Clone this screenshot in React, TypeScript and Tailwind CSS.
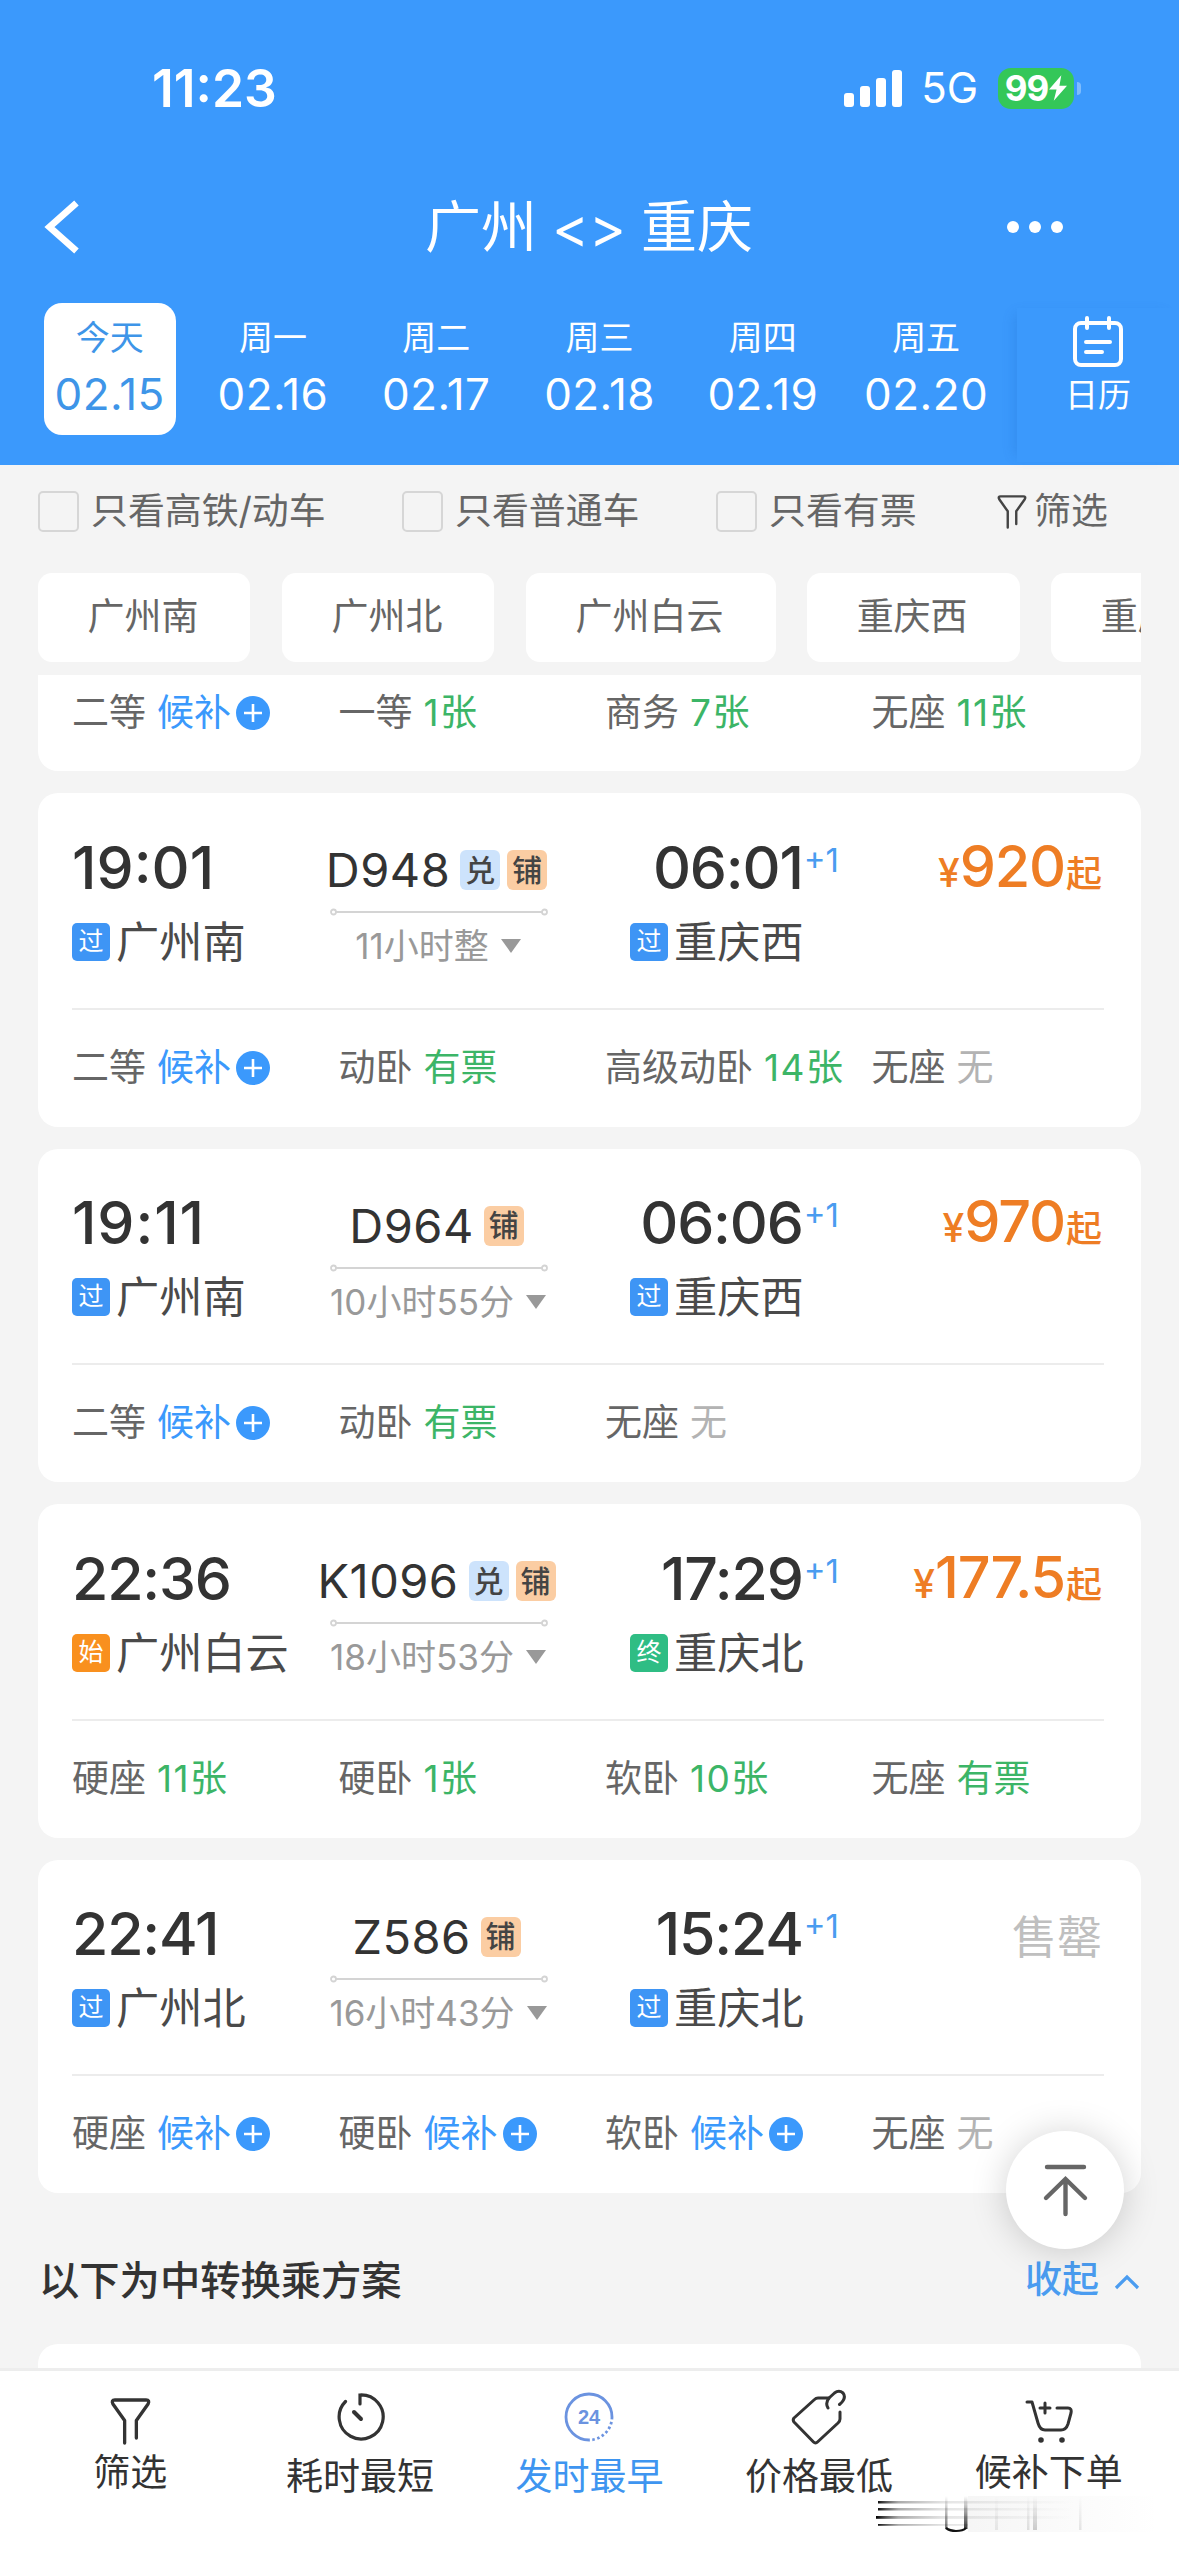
import { useState } from "react";

type Tone = "wait" | "ok" | "none";
type Seat = { name: string; left: string; tone: Tone };
type Stop = "过" | "始" | "终";

type Train = {
  no: string;
  tags: ("兑" | "铺")[];
  depart: string;
  arrive: string;
  from: string;
  to: string;
  fromType: Stop;
  toType: Stop;
  duration: string;
  price: string | null;
  seats: Seat[];
};

const DAYS = [
  { week: "今天", date: "02.15" },
  { week: "周一", date: "02.16" },
  { week: "周二", date: "02.17" },
  { week: "周三", date: "02.18" },
  { week: "周四", date: "02.19" },
  { week: "周五", date: "02.20" },
];

const STATIONS = ["广州南", "广州北", "广州白云", "重庆西", "重庆北"];

const PREV_SEATS: Seat[] = [
  { name: "二等", left: "候补", tone: "wait" },
  { name: "一等", left: "1张", tone: "ok" },
  { name: "商务", left: "7张", tone: "ok" },
  { name: "无座", left: "11张", tone: "ok" },
];

const TRAINS: Train[] = [
  {
    no: "D948",
    tags: ["兑", "铺"],
    depart: "19:01",
    arrive: "06:01",
    from: "广州南",
    to: "重庆西",
    fromType: "过",
    toType: "过",
    duration: "11小时整",
    price: "920",
    seats: [
      { name: "二等", left: "候补", tone: "wait" },
      { name: "动卧", left: "有票", tone: "ok" },
      { name: "高级动卧", left: "14张", tone: "ok" },
      { name: "无座", left: "无", tone: "none" },
    ],
  },
  {
    no: "D964",
    tags: ["铺"],
    depart: "19:11",
    arrive: "06:06",
    from: "广州南",
    to: "重庆西",
    fromType: "过",
    toType: "过",
    duration: "10小时55分",
    price: "970",
    seats: [
      { name: "二等", left: "候补", tone: "wait" },
      { name: "动卧", left: "有票", tone: "ok" },
      { name: "无座", left: "无", tone: "none" },
    ],
  },
  {
    no: "K1096",
    tags: ["兑", "铺"],
    depart: "22:36",
    arrive: "17:29",
    from: "广州白云",
    to: "重庆北",
    fromType: "始",
    toType: "终",
    duration: "18小时53分",
    price: "177.5",
    seats: [
      { name: "硬座", left: "11张", tone: "ok" },
      { name: "硬卧", left: "1张", tone: "ok" },
      { name: "软卧", left: "10张", tone: "ok" },
      { name: "无座", left: "有票", tone: "ok" },
    ],
  },
  {
    no: "Z586",
    tags: ["铺"],
    depart: "22:41",
    arrive: "15:24",
    from: "广州北",
    to: "重庆北",
    fromType: "过",
    toType: "过",
    duration: "16小时43分",
    price: null,
    seats: [
      { name: "硬座", left: "候补", tone: "wait" },
      { name: "硬卧", left: "候补", tone: "wait" },
      { name: "软卧", left: "候补", tone: "wait" },
      { name: "无座", left: "无", tone: "none" },
    ],
  },
];

const TONE: Record<Tone, string> = {
  wait: "text-[#3b99fc]",
  ok: "text-[#3cb567]",
  none: "text-[#b3b3b3]",
};

const STOP_BG: Record<Stop, string> = {
  过: "bg-[#3e95f5]",
  始: "bg-[#f9901e]",
  终: "bg-[#2fbd84]",
};

export default function App() {
  const [day, setDay] = useState(0);

  return (
    <div className="relative flex h-[2556px] w-[1179px] flex-col overflow-hidden bg-[#f4f4f4] font-[Inter,'Noto_Sans_CJK_SC',sans-serif] text-[#333]">
      <header className="h-[465px] shrink-0 bg-[#3b99fc] text-white">
        <StatusBar />

        <div className="flex h-[126px] items-center justify-between pr-[116px] pb-[20px] pl-[44px]">
          <button className="w-[190px]" aria-label="返回">
            <svg width="36" height="54" viewBox="0 0 36 56" fill="none" stroke="currentColor" strokeWidth="7">
              <path d="M33 3 L5 28 L33 53" />
            </svg>
          </button>
          <h1 className="flex items-center text-[56px] leading-[64px]">
            广州<span className="mx-[15px] pt-[2px] text-[56px]">&lt;&gt;</span>重庆
          </h1>
          <div className="flex w-[119px] justify-end gap-[10px]">
            <i className="size-[12px] rounded-full bg-white" />
            <i className="size-[12px] rounded-full bg-white" />
            <i className="size-[12px] rounded-full bg-white" />
          </div>
        </div>

        <div className="flex h-[162px] pl-[28px]">
          {DAYS.map((d, i) => (
            <button
              key={d.date}
              onClick={() => setDay(i)}
              className="flex w-[163.3px] justify-center pt-[3px]"
            >
              <span
                className={`flex h-[132px] w-[132px] flex-col items-center rounded-[18px] pt-[13px] ${
                  day === i ? "bg-white text-[#3e95e8]" : "text-white"
                }`}
              >
                <span className="text-[34px] leading-[44px]">{d.week}</span>
                <span className="mt-[8px] text-[44px] leading-[52px] tracking-[0.01em]">{d.date}</span>
              </span>
            </button>
          ))}
          <button className="mt-[8px] ml-[9px] flex flex-1 flex-col items-center pt-[8px] shadow-[-8px_0_12px_-6px_rgba(20,90,180,0.2)]">
            <svg width="52" height="52" viewBox="0 0 52 52" fill="none" stroke="currentColor" strokeWidth="4" strokeLinecap="round">
              <rect x="3" y="7" width="46" height="42" rx="6" />
              <path d="M15 2v10M37 2v10M14 26h24M14 36h16" />
            </svg>
            <span className="mt-[5px] text-[33px] leading-[44px]">日历</span>
          </button>
        </div>
      </header>

      {/* 筛选条件 */}
      <div className="flex h-[108px] shrink-0 items-center pb-[15px] pl-[38px] text-[36.9px] text-[#666]">
        <Check label="只看高铁/动车" className="w-[364px]" />
        <Check label="只看普通车" className="w-[314px]" />
        <Check label="只看有票" className="w-[281px]" />
        <FunnelIcon className="h-[34px] w-[30px] text-[#444]" />
        <span className="ml-[7px] pb-[2px]">筛选</span>
      </div>

      <div className="mx-[38px] flex shrink-0 gap-[31.7px] overflow-hidden">
        {STATIONS.map((s) => (
          <button
            key={s}
            className="h-[89px] shrink-0 rounded-[14px] bg-white pr-[52px] pb-[2px] pl-[49.4px] text-[37px] text-[#666]"
          >
            {s}
          </button>
        ))}
      </div>

      <main className="mx-[38px] mt-[13px] flex min-h-0 flex-1 flex-col overflow-hidden">
        <div className="mb-[22px] h-[96px] shrink-0 rounded-b-[20px] bg-white px-[34px] pt-[12px]">
          <Seats seats={PREV_SEATS} />
        </div>

        {TRAINS.map((t) => (
          <TrainCard key={t.no} train={t} />
        ))}

        <div className="flex h-[129px] shrink-0 items-center justify-between pl-[1px]">
          <h2 className="pt-[3px] text-[40.3px] font-medium">以下为中转换乘方案</h2>
          <button className="flex items-center pr-[1px] text-[37px] font-medium text-[#4a9cf0]">
            收起
            <svg className="mt-[4px] ml-[15px]" width="26" height="16" viewBox="0 0 26 16" fill="none" stroke="currentColor" strokeWidth="3.2">
              <path d="M2 14 L13 3 L24 14" />
            </svg>
          </button>
        </div>
        <div className="h-[60px] shrink-0 rounded-[20px] bg-white" />
      </main>

      <TabBar />

      <button
        aria-label="回到顶部"
        className="absolute top-[2131px] left-[1006px] flex size-[118px] items-center justify-center rounded-full bg-white text-[#666] shadow-[0_2px_36px_rgba(0,0,0,0.18)]"
      >
        <svg width="48" height="54" viewBox="0 0 48 54" fill="none" stroke="currentColor" strokeWidth="4.4" strokeLinecap="round">
          <path d="M6 4h37M24.5 17v34M5 35 L24.5 16 L44 35" />
        </svg>
      </button>
    </div>
  );
}

function StatusBar() {
  return (
    <div className="flex h-[174px] items-center justify-between pt-[2px] pr-[98px] pl-[152px]">
      <span className="text-[51.5px] leading-[60px] font-semibold">11:23</span>
      <div className="flex items-center">
        <div className="flex h-[38px] items-end gap-[6px]">
          <i className="h-[14px] w-[10px] rounded-[3px] bg-white" />
          <i className="h-[21px] w-[10px] rounded-[3px] bg-white" />
          <i className="h-[29px] w-[10px] rounded-[3px] bg-white" />
          <i className="h-[37px] w-[10px] rounded-[3px] bg-white" />
        </div>
        <span className="ml-[19px] text-[42px] leading-[50px]">5G</span>
        <div className="ml-[20px] flex h-[41px] w-[76px] items-center justify-center rounded-[13px] bg-[#34c759]">
          <span className="text-[35px] leading-[41px] font-bold tracking-tight">99</span>
          <svg className="ml-[1px]" width="18" height="26" viewBox="0 0 19 27" fill="currentColor">
            <path d="M13 0 L0 15 H8 L5 27 L19 11 H11 Z" />
          </svg>
        </div>
        <i className="ml-[3px] h-[13px] w-[4px] rounded-r-full bg-[#7fbdfd]" />
      </div>
    </div>
  );
}

function Check({ label, className }: { label: string; className: string }) {
  return (
    <label className={`flex items-center ${className}`}>
      <span className="mr-[12px] size-[41px] rounded-[5px] border-[2.5px] border-[#d6d6d6]" />
      <span className="pb-[2px]">{label}</span>
    </label>
  );
}

function Seats({ seats }: { seats: Seat[] }) {
  return (
    <div className="flex h-[52px] items-center text-[37px] leading-[52px] whitespace-nowrap">
      {seats.map((s) => (
        <div key={s.name} className="flex w-[266.5px] shrink-0 items-center">
          <span className="text-[#666]">{s.name}</span>
          <span className={`ml-[11px] ${TONE[s.tone]} ${/\d/.test(s.left) ? "tracking-[0.04em]" : ""}`}>
            {s.left}
          </span>
          {s.tone === "wait" && (
            <svg className="ml-[5px]" width="34" height="34" viewBox="0 0 34 34">
              <circle cx="17" cy="17" r="17" fill="#3b99fc" />
              <path d="M17 8v18M8 17h18" stroke="#fff" strokeWidth="2.6" />
            </svg>
          )}
        </div>
      ))}
    </div>
  );
}

// the digit 1 is narrow, so times with several of them get looser tracking
function timeTracking(time: string) {
  const ones = time.split("1").length - 1;
  if (ones >= 3) return "tracking-[0.015em]";
  if (ones === 2) return "tracking-normal";
  return "tracking-[-0.02em]";
}

function Station({ type, name }: { type: Stop; name: string }) {
  return (
    <div className="flex items-center">
      <span className={`flex size-[38px] items-center justify-center rounded-[5px] text-[25px] text-white ${STOP_BG[type]}`}>
        {type}
      </span>
      <span className="ml-[6px] text-[43.2px] leading-[52px] whitespace-nowrap text-[#4a4a4a]">{name}</span>
    </div>
  );
}

function TrainCard({ train }: { train: Train }) {
  return (
    <article className="mb-[22px] h-[333.5px] shrink-0 rounded-[20px] bg-white pr-[37px] pl-[34px]">
      <div className="flex h-[216.5px] border-b-2 border-[#ececec]">
        <div className="w-[248px] pt-[41.5px]">
          <div className={`text-[59px] leading-[66px] font-medium ${timeTracking(train.depart)}`}>{train.depart}</div>
          <div className="mt-[15px]">
            <Station type={train.fromType} name={train.from} />
          </div>
        </div>

        <div className="flex w-[237px] flex-col items-center pt-[50px]">
          <div className="-ml-[4px] flex items-center gap-[7px]">
            <span className="mr-[3px] text-[47px] leading-[54px] tracking-[0.01em]">{train.no}</span>
            {train.tags.map((tag) => (
              <span
                key={tag}
                className={`flex size-[40px] items-center justify-center rounded-[6px] text-[30px] font-medium text-[#444] ${
                  tag === "兑" ? "bg-[#cde3fc]" : "bg-[#fbcda3]"
                }`}
              >
                {tag}
              </span>
            ))}
          </div>
          <svg className="mt-[11px]" width="218" height="8" viewBox="0 0 218 8" fill="none" stroke="#d4d4d4" strokeWidth="1.8">
            <path d="M6 4h206" />
            <circle cx="3.5" cy="4" r="2.5" />
            <circle cx="214.5" cy="4" r="2.5" />
          </svg>
          <div className="mt-[7px] flex items-center text-[35px] leading-[46px] whitespace-nowrap text-[#999]">
            {train.duration}
            <svg className="ml-[11px]" width="22" height="16" viewBox="0 0 22 16" fill="#999">
              <path d="M1 1 H21 L11 15 Z" />
            </svg>
          </div>
        </div>

        <div className="ml-[73px] w-[209px] pt-[41.5px]">
          <div className="flex justify-end">
            <span className={`text-[59px] leading-[66px] font-medium ${timeTracking(train.arrive)}`}>{train.arrive}</span>
            <sup className="top-0 ml-[1px] text-[33px] leading-[51px] text-[#4a9cf0]">+1</sup>
          </div>
          <div className="mt-[15px]">
            <Station type={train.toType} name={train.to} />
          </div>
        </div>

        <div className="flex flex-1 items-baseline justify-end pt-[39.5px] pr-[2px] font-medium whitespace-nowrap text-[#ee7d24]">
          {train.price ? (
            <>
              <span className="text-[39px]">¥</span>
              <span className="text-[57.5px] leading-[66px] tracking-[-0.02em]">{train.price}</span>
              <span className="ml-[1px] text-[36px]">起</span>
            </>
          ) : (
            <span className="text-[45px] leading-[77px] font-normal text-[#bfbfbf]">售罄</span>
          )}
        </div>
      </div>

      <div className="pt-[32px]">
        <Seats seats={train.seats} />
      </div>
    </article>
  );
}

function FunnelIcon({ className }: { className: string }) {
  return (
    <svg className={className} viewBox="0 0 42 48" fill="none" stroke="currentColor" strokeWidth="3.4" strokeLinecap="round" strokeLinejoin="round">
      <path d="M15 46V23L3 6Q1 2 5 2H37Q41 2 39 6L27 23V41" />
    </svg>
  );
}

function TabBar() {
  return (
    <nav className="relative flex h-[188px] shrink-0 border-t-[3px] border-[#ededed] bg-white px-[15.5px] text-[37px] leading-[50px] text-[#333]">
      <div className="flex flex-1 flex-col items-center pt-[27px]">
        <FunnelIcon className="h-[47px] w-[41px]" />
        <span className="mt-[3px]">筛选</span>
      </div>
      <div className="flex flex-1 flex-col items-center pt-[21px]">
        <svg width="50" height="50" viewBox="0 0 50 50" fill="none" stroke="currentColor" strokeWidth="3.2" strokeLinecap="round">
          <path d="M10.5 9.5 A22 22 0 1 0 25 3 V12" />
          <path d="M19 20 L26 27" strokeWidth="4" />
        </svg>
        <span className="mt-[10px]">耗时最短</span>
      </div>
      <div className="flex flex-1 flex-col items-center pt-[21px] text-[#3e95f0]">
        <svg width="50" height="50" viewBox="0 0 50 50" fill="none" stroke="#6b93e0" strokeWidth="2.8">
          <path d="M25 48 A23 23 0 1 1 48 25" />
          <path d="M48 25 A23 23 0 0 1 25 48" strokeDasharray="2.5 2.5" />
          <text x="25" y="32" textAnchor="middle" fontFamily="Liberation Sans" fontSize="20" fontWeight="700" fill="#6b93e0" stroke="none">
            24
          </text>
        </svg>
        <span className="mt-[10px]">发时最早</span>
      </div>
      <div className="flex flex-1 flex-col items-center pt-[18px]">
        <svg width="56" height="56" viewBox="0 0 56 56" fill="none" stroke="currentColor" strokeWidth="3" strokeLinecap="round" strokeLinejoin="round">
          <path d="M38 9 H27 Q25 9 23.5 10.5 L3 29 Q1.5 31 3 33 L22.5 53 Q24.5 55 26.5 53 L47 34 Q49 32 49 30 V23" />
          <path d="M37 19 Q34 14 38 9 L43.5 4 Q48 0.5 52 4 Q56 9 48.5 15.5" />
        </svg>
        <span className="mt-[7px]">价格最低</span>
      </div>
      <div className="flex flex-1 flex-col items-center pt-[28px]">
        <svg width="48" height="46" viewBox="0 0 48 46" fill="none" stroke="currentColor" strokeWidth="3" strokeLinecap="round" strokeLinejoin="round">
          <path d="M2 3 H7 L13 24 Q15 31 20 31 H36 Q41 31 43 25 L46 14 Q47 9 43 9 H32" />
          <path d="M20 4v10M15 9h10" />
          <circle cx="16" cy="41" r="1.8" fill="currentColor" strokeWidth="2" />
          <circle cx="37" cy="41" r="1.8" fill="currentColor" strokeWidth="2" />
        </svg>
        <span className="mt-[3px]">候补下单</span>
      </div>
      <Streaks />
    </nav>
  );
}

// faded streaks in the bottom corner
function Streaks() {
  return (
    <svg className="absolute right-[20px] bottom-[22px]" width="283" height="38" viewBox="0 0 283 38" fill="none">
      <defs>
        <linearGradient id="fadeX" x1="0" x2="283" y1="0" y2="0" gradientUnits="userSpaceOnUse">
          <stop offset="0" stopColor="#000" />
          <stop offset="0.08" stopColor="#555" stopOpacity="0.5" />
          <stop offset="0.24" stopColor="#777" stopOpacity="0.2" />
          <stop offset="0.7" stopColor="#999" stopOpacity="0" />
        </linearGradient>
        <linearGradient id="fadeY" x1="0" x2="0" y1="0" y2="36" gradientUnits="userSpaceOnUse">
          <stop offset="0" stopColor="#000" stopOpacity="0" />
          <stop offset="1" stopColor="#000" />
        </linearGradient>
        <linearGradient id="haze" x1="85" x2="283" y1="0" y2="0" gradientUnits="userSpaceOnUse">
          <stop offset="0" stopColor="#888" stopOpacity="0.08" />
          <stop offset="1" stopColor="#888" stopOpacity="0" />
        </linearGradient>
      </defs>
      <rect x="92" y="0" width="191" height="36" fill="url(#haze)" />
      <g fill="url(#fadeX)">
        <rect x="2" y="5" width="240" height="2.5" />
        <rect x="2" y="12" width="240" height="2.5" />
        <rect x="0" y="20" width="240" height="2.8" />
        <rect x="2" y="28" width="90" height="1.8" />
      </g>
      <g fill="url(#fadeY)">
        <rect x="69" y="0" width="2.5" height="33" opacity="0.6" />
        <rect x="88" y="0" width="3.5" height="33" opacity="0.85" />
        <rect x="119" y="0" width="3" height="34" opacity="0.08" />
        <rect x="151" y="0" width="2.5" height="34" opacity="0.12" />
        <rect x="157" y="0" width="4" height="34" opacity="0.2" />
        <rect x="203" y="0" width="2.5" height="34" opacity="0.1" />
      </g>
      <path d="M70 32 Q74 35 80 35 Q87 35 90 32" stroke="#111" strokeWidth="2.2" />
    </svg>
  );
}
